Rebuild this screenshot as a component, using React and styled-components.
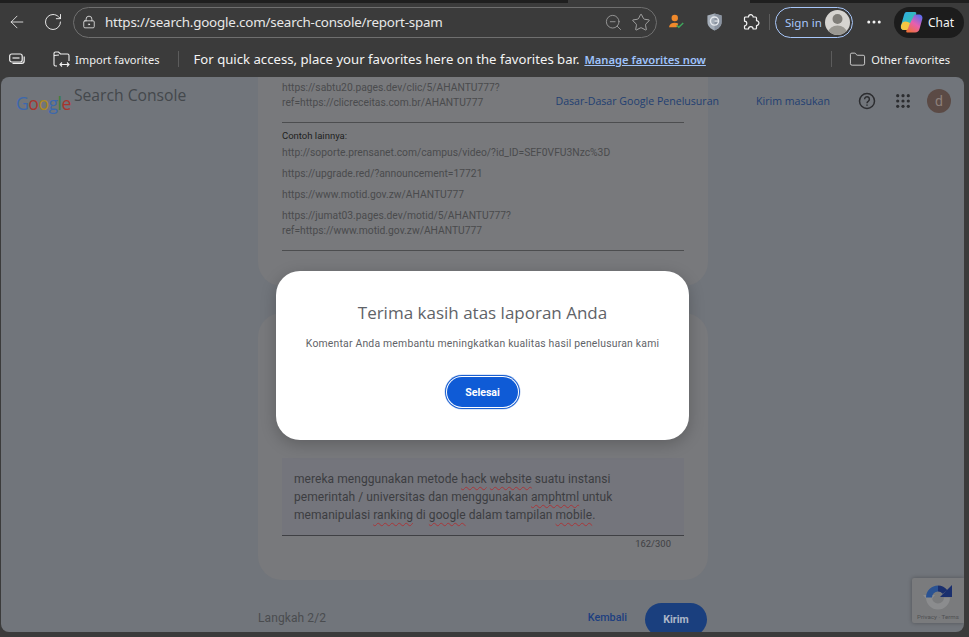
import React from "react";
import styled, { createGlobalStyle } from "styled-components";
import { ArrowLeft, RotateCw, LockKeyhole, ZoomOut, Star, Folder, MoreHorizontal } from "lucide-react";

const GlobalStyle = createGlobalStyle`
  html, body {
    margin: 0;
    padding: 0;
    height: 100%;
    overflow: hidden;
    background: #3b3b3b;
  }
`;

const Shell = styled.div`
  width: 969px;
  height: 637px;
  display: flex;
  flex-direction: column;
  background: #3b3b3b;
  font-family: "Noto Sans", "Open Sans", sans-serif;
  overflow: hidden;
`;

const TabStrip = styled.div`
  height: 3px;
  flex: none;
  display: grid;
  grid-template-columns: 568px 182px 1fr;
  span { background: #1f1f1f; }
  span:nth-child(2) { background: #3b3b3b; }
`;

const Toolbar = styled.div`
  height: 38px;
  flex: none;
  display: flex;
  align-items: center;
  padding: 0 6px 0 7px;
  color: #f2f2f2;
`;

const NavButton = styled.div`
  width: ${(p) => p.$w || 20}px;
  margin-left: ${(p) => p.$ml || 0}px;
  margin-right: ${(p) => p.$mr || 0}px;
  flex: none;
  display: flex;
  justify-content: center;
  align-items: center;
`;

const AddressBar = styled.div`
  width: 584px;
  height: 31px;
  flex: none;
  box-sizing: border-box;
  border: 1px solid #6f6f6f;
  border-radius: 16px;
  display: flex;
  align-items: center;
  padding: 0 5px 0 8px;
  margin-right: 11px;
`;

const Url = styled.span`
  flex: 1;
  margin-left: 9px;
  font-size: 13.4px;
  letter-spacing: -0.2px;
  color: #e8e8e8;
  white-space: nowrap;
`;

const SignIn = styled.div`
  width: 78px;
  height: 31px;
  box-sizing: border-box;
  flex: none;
  border: 1px solid #a8c7fa;
  border-radius: 16px;
  display: flex;
  align-items: center;
  justify-content: space-between;
  padding: 0 2px 0 9px;
  font-size: 11.6px;
  color: #a8c7fa;
`;

const AvatarDisc = styled.div`
  width: 25px;
  height: 25px;
  border-radius: 50%;
  background: #d6d4d0;
  overflow: hidden;
  display: flex;
`;

const Divider = styled.div`
  width: 1px;
  height: ${(p) => p.$h || 16}px;
  background: #5c5c5c;
  flex: none;
  margin: ${(p) => p.$m || "0"};
`;

const ChatPill = styled.div`
  width: 70px;
  height: 31px;
  flex: none;
  background: #1c1c1c;
  border-radius: 16px;
  display: flex;
  align-items: center;
  gap: 4px;
  padding-left: 5px;
  box-sizing: border-box;
  font-size: 12px;
  color: #f4f4f4;
`;

const FavBar = styled.div`
  height: 36px;
  flex: none;
  display: flex;
  align-items: center;
  padding: 0 19px 0 9px;
  color: #f0f0f0;
  white-space: nowrap;
`;

const FavItem = styled.span`
  font-size: 11.1px;
  margin-left: ${(p) => p.$ml || 0}px;
`;

const FavHint = styled.span`
  font-size: 13.15px;
  color: #f4f4f4;
`;

const FavLink = styled.a`
  font-size: 11.2px;
  font-weight: 600;
  color: #9fc3fb;
  text-decoration: underline;
  margin-left: 5px;
`;

const Viewport = styled.div`
  position: relative;
  flex: none;
  width: 963px;
  height: 555px;
  margin-left: 1px;
  border-radius: 8px;
  overflow: hidden;
  background: #71757b;
  font-family: Roboto, "Noto Sans", sans-serif;
`;

const Header = styled.header`
  position: absolute;
  inset: 0 0 auto 0;
  height: 48px;
  display: flex;
  align-items: center;
  padding: 0 13px 0 15px;
`;

const Logo = styled.div`
  display: flex;
  align-items: flex-start;
  gap: 3px;
  margin-right: auto;
`;

const GoogleWord = styled.span`
  font-family: "Open Sans", sans-serif;
  font-size: 17.6px;
  letter-spacing: -0.5px;
  line-height: 20px;
  margin-top: 4px;
`;

const Letter = styled.span`
  color: ${(p) => p.$c};
`;

const ProductName = styled.span`
  font-family: "Open Sans", sans-serif;
  font-size: 15.7px;
  color: #44484c;
  line-height: 20px;
  margin-top: -4px;
`;

const TopLink = styled.a`
  font-family: "Open Sans", sans-serif;
  font-size: 10.6px;
  color: #223f72;
  margin-right: ${(p) => p.$mr}px;
`;

const AccountAvatar = styled.div`
  width: 24px;
  height: 24px;
  border-radius: 50%;
  background: #5b4a45;
  color: #8d807b;
  font-size: 14px;
  display: flex;
  align-items: center;
  justify-content: center;
  margin-left: 17px;
`;

const Column = styled.main`
  width: 450px;
  margin: 0 auto;
  padding-left: 1px;
`;

const Card = styled.section`
  background: #78797c;
  border-radius: ${(p) => (p.$top ? "0 0 24px 24px" : "24px")};
  height: ${(p) => p.$h}px;
  box-sizing: border-box;
  padding: ${(p) => p.$pad};
  display: flex;
  flex-direction: column;
  justify-content: ${(p) => (p.$end ? "flex-end" : "flex-start")};
  margin-bottom: ${(p) => p.$mb}px;
`;

const UrlBlock = styled.p`
  margin: 0 0 ${(p) => p.$mb ?? 6}px;
  font-size: 10.3px;
  line-height: 15px;
  color: #4a4b4d;
`;

const Rule = styled.hr`
  width: 100%;
  margin: ${(p) => p.$m};
  border: 0;
  border-top: 1px solid #4c4d4f;
`;

const Caption = styled.p`
  margin: 0 0 3px;
  font-size: 9.5px;
  line-height: 13px;
  color: #1e1f21;
`;

const TextBox = styled.div`
  background: #74757c;
  border-bottom: 1px solid #3f4044;
  height: 78px;
  box-sizing: border-box;
  padding: 12px 12px 0;
  font-size: 12px;
  line-height: 18px;
  color: #3c3d41;
  letter-spacing: 0.06px;
`;

const Misspelt = styled.span`
  text-decoration: underline wavy #a8363a 1px;
  text-underline-offset: 3px;
`;

const Counter = styled.div`
  font-size: 9.4px;
  letter-spacing: 0.05px;
  line-height: 14px;
  margin-top: 1px;
  margin-bottom: 1px;
  text-align: right;
  padding-right: 13px;
  color: #3f4044;
`;

const Footer = styled.div`
  display: flex;
  align-items: center;
  height: 29px;
  padding-right: 1px;
`;

const Step = styled.span`
  font-size: 12px;
  letter-spacing: 0.1px;
  color: #4a4c4f;
  margin-right: auto;
`;

const BackLink = styled.a`
  font-size: 10.8px;
  font-weight: 500;
  color: #1d3f80;
  margin-right: 18px;
`;

const SendButton = styled.div`
  width: 62px;
  height: 33px;
  margin-top: 4px;
  border-radius: 17px;
  background: #1a3f7e;
  color: #aeb7c8;
  font-size: 10.6px;
  font-weight: 700;
  display: flex;
  align-items: center;
  justify-content: center;
`;

const Recaptcha = styled.aside`
  position: absolute;
  right: 0;
  bottom: 9px;
  width: 52px;
  height: 45px;
  background: #7a7b7d;
  border-radius: 2px 0 0 2px;
  box-shadow: 0 0 4px rgba(0, 0, 0, 0.3);
  display: flex;
  flex-direction: column;
  align-items: center;
  padding-top: 5px;
  box-sizing: border-box;
  overflow: hidden;
`;

const RecaptchaText = styled.span`
  font-size: 6.2px;
  line-height: 8px;
  color: #4f5052;
  white-space: nowrap;
  margin-top: 1px;
`;

const Modal = styled.div`
  position: absolute;
  left: 275px;
  top: 194px;
  width: 413px;
  height: 169px;
  background: #fff;
  border-radius: 24px;
  box-shadow: 0 4px 16px rgba(0, 0, 0, 0.22);
  box-sizing: border-box;
  padding-top: 31px;
  display: flex;
  flex-direction: column;
  align-items: center;
`;

const ModalTitle = styled.h2`
  margin: 0;
  font-family: "Open Sans", sans-serif;
  font-weight: 400;
  font-size: 17px;
  line-height: 22px;
  color: #5f6368;
`;

const ModalText = styled.p`
  margin: 13px 0 0;
  font-size: 10.4px;
  line-height: 14px;
  letter-spacing: 0.2px;
  color: #5f6368;
`;

const DoneButton = styled.div`
  margin-top: 26px;
  width: 71px;
  height: 30px;
  border-radius: 15px;
  background: #0f5bd6;
  color: #fff;
  font-size: 10.6px;
  font-weight: 700;
  display: flex;
  align-items: center;
  justify-content: center;
  box-shadow: 0 0 0 1px #fff, 0 0 0 2px #1a5fd0, 0 0 0 2.5px #b7cdf2;
`;

const PersonCheck = () => (
  <svg width="16" height="16" viewBox="0 0 18 18">
    <circle cx="6.5" cy="4.5" r="3.6" fill="#f0892b" />
    <path d="M0 15c.5-3.6 3-5.2 6.5-5.2 1.7 0 3 .4 4 1.2L8.5 15z" fill="#f0892b" />
    <path d="M8.6 12.6l2.4 2.4 5-5" fill="none" stroke="#3fa75c" strokeWidth="1.6" />
  </svg>
);

const ShieldIcon = () => (
  <svg width="17" height="20" viewBox="0 0 18 20">
    <path d="M9 1l7.5 2v7c0 4-3.2 7.4-7.5 9C4.700 17.400 1.500 14 1.500 10V3z" fill="#a4adb8" />
    <path d="M9 1l7.500 2v7c0 4-3.200 7.400-7.500 9z" fill="#8a93a0" />
    <circle cx="9" cy="9" r="4.300" fill="none" stroke="#e6e9ee" strokeWidth="1.500" />
    <path d="M9 9h4" stroke="#e6e9ee" strokeWidth="1.300" />
  </svg>
);

const ExtensionIcon = () => (
  <svg width="18" height="18" viewBox="0 0 18 18" fill="none" stroke="#f4f4f4" strokeWidth="1.200" strokeLinejoin="round">
    <path d="M6.500 4H3.500a1 1 0 0 0-1 1v3.200a2.300 2.300 0 1 1 0 4.600V15a1 1 0 0 0 1 1h3a2.300 2.300 0 0 1 4.600 0h2.400a1 1 0 0 0 1-1v-2.500a2.400 2.400 0 1 0 0-4.800V5a1 1 0 0 0-1-1h-2.400a2.300 2.300 0 1 0-4.600 0z" />
  </svg>
);

const CollectionsIcon = () => (
  <svg width="16" height="14" viewBox="0 0 16 14" fill="none" stroke="#f0f0f0" strokeWidth="1.200">
    <rect x="0.700" y="2" width="12.500" height="8" rx="2" />
    <path d="M3.500 6h7" />
    <path d="M15.200 4.500v4.200c0 1.500-1 2.600-2.500 2.600H3.500" />
  </svg>
);

const ImportIcon = () => (
  <svg width="17" height="17" viewBox="0 0 17 17" fill="none" stroke="#f0f0f0" strokeWidth="1.100">
    <path d="M4 15H2.500A1.500 1.500 0 0 1 1 13.500v-11A1.500 1.500 0 0 1 2.500 1h3l2 2h7A1.500 1.500 0 0 1 16 4.500V10" />
    <path d="M1 4.500l5-.5M7 13.500h9M14 11.500l2 2-2 2M9 11.500l-2 2 2 2" />
  </svg>
);

const CopilotIcon = () => (
  <svg width="25" height="24" viewBox="0 0 24 24">
    <defs>
      <linearGradient id="cpA" x1="0" y1="0" x2="1" y2="1">
        <stop offset="0" stopColor="#2ea6f0" />
        <stop offset="1" stopColor="#37d08a" />
      </linearGradient>
      <linearGradient id="cpB" x1="0.800" y1="0" x2="0.200" y2="1">
        <stop offset="0" stopColor="#5a6cf0" />
        <stop offset="0.5" stopColor="#e75fb0" />
        <stop offset="1" stopColor="#f0703a" />
      </linearGradient>
    </defs>
    <path d="M7 2h8.500c1 0 1.500.8 1.200 1.800L12.500 17c-.6 1.800-1.800 3-3.500 3H4.500C2 20 .8 18 1.500 15.500L4.500 5C5 3 5.800 2 7 2z" fill="url(#cpA)" />
    <path d="M15 4.500h4c3 0 4.500 2 3.800 4.500L20 19c-.6 2-2 3.500-4.500 3.500H8c-1 0-1.500-.8-1.200-1.800z" fill="url(#cpB)" />
    <path d="M3 12.500c2.500-1.500 5-1 7.500.5l-2 5.500c-.5 1-1.200 1.500-2.500 1.500H4.500c-2.500 0-3.500-2-3-4.500z" fill="#f4c542" />
  </svg>
);

const GridDots = () => (
  <svg width="14" height="14" viewBox="0 0 14 14" fill="#2c2d30">
    {[1.700, 7, 12.300].flatMap((y) =>
      [1.700, 7, 12.300].map((x) => <circle key={`${x}-${y}`} cx={x} cy={y} r="1.600" />)
    )}
  </svg>
);

const HelpIcon = () => (
  <svg width="18" height="18" viewBox="0 0 18 18" fill="none" stroke="#2c2d30" strokeWidth="1.500">
    <circle cx="9" cy="9" r="7.500" />
    <path d="M6.600 7.200a2.400 2.400 0 1 1 3.800 1.900c-.9.600-1.400 1-1.400 2.100" />
    <path d="M9 12.400v1.300" />
  </svg>
);

const RecaptchaLogo = () => (
  <svg width="30" height="29" viewBox="0 0 30 29" fill="none">
    <path d="M24 14.500A9 9 0 0 1 6 14.500" stroke="#8b8c8e" strokeWidth="6" />
    <path d="M0 12h12l-6 7z" fill="#8b8c8e" />
    <path d="M6 14.500A9 9 0 0 1 15 5.500" stroke="#2a5292" strokeWidth="6" />
    <path d="M15 5.500A9 9 0 0 1 22 9" stroke="#1a2f6e" strokeWidth="6" />
    <path d="M29 2v12H17z" fill="#1a2f6e" />
  </svg>
);

export default function App() {
  return (
    <Shell>
      <GlobalStyle />
      <TabStrip>
        <span />
        <span />
        <span />
      </TabStrip>
      <Toolbar>
        <NavButton $w={20} $mr={16}>
          <ArrowLeft size={26} strokeWidth={1} />
        </NavButton>
        <NavButton $w={20} $mr={10}>
          <RotateCw size={20} strokeWidth={1.100} />
        </NavButton>
        <AddressBar>
          <LockKeyhole size={14} strokeWidth={1.400} color="#e8e8e8" />
          <Url>https://search.google.com/search-console/report-spam</Url>
          <NavButton $w={20} $mr={8}>
            <ZoomOut size={19} strokeWidth={1} color="#a9a9a9" />
          </NavButton>
          <NavButton $w={20}>
            <Star size={21} strokeWidth={1} color="#b5b5b5" />
          </NavButton>
        </AddressBar>
        <NavButton $w={18} $mr={19}>
          <PersonCheck />
        </NavButton>
        <NavButton $w={18} $mr={19}>
          <ShieldIcon />
        </NavButton>
        <NavButton $w={18}>
          <ExtensionIcon />
        </NavButton>
        <Divider $h={16} $m="0 5px 0 9px" />
        <SignIn>
          Sign in
          <AvatarDisc>
            <svg width="25" height="25" viewBox="0 0 25 25">
              <circle cx="12.500" cy="9" r="5" fill="#7f7d78" />
              <ellipse cx="12.500" cy="22" rx="9" ry="6.500" fill="#9a9892" />
            </svg>
          </AvatarDisc>
        </SignIn>
        <NavButton $w={20} $ml={11} $mr={10}>
          <MoreHorizontal size={18} strokeWidth={2} />
        </NavButton>
        <ChatPill>
          <CopilotIcon />
          Chat
        </ChatPill>
      </Toolbar>
      <FavBar>
        <CollectionsIcon />
        <NavButton $w={17} $ml={28}>
          <ImportIcon />
        </NavButton>
        <FavItem $ml={5}>Import favorites</FavItem>
        <Divider $h={16} $m="0 15px 0 18px" />
        <FavHint>For quick access, place your favorites here on the favorites bar.</FavHint>
        <FavLink>Manage favorites now</FavLink>
        <Divider $h={16} $m="0 17px 0 auto" />
        <Folder size={17} strokeWidth={1.100} />
        <FavItem $ml={5}>Other favorites</FavItem>
      </FavBar>
      <Viewport>
        <Column>
          <Card $top $h={209} $mb={27} $pad="3px 24px 0">
            <UrlBlock $mb={0}>
              https://sabtu20.pages.dev/clic/5/AHANTU777?
              <br />
              ref=https://clicreceitas.com.br/AHANTU777
            </UrlBlock>
            <Rule $m="12px 0 6px" />
            <Caption>Contoh lainnya:</Caption>
            <UrlBlock>http://soporte.prensanet.com/campus/video/?id_ID=SEF0VFU3Nzc%3D</UrlBlock>
            <UrlBlock>https://upgrade.red/?announcement=17721</UrlBlock>
            <UrlBlock>https://www.motid.gov.zw/AHANTU777</UrlBlock>
            <UrlBlock $mb={0}>
              https://jumat03.pages.dev/motid/5/AHANTU777?
              <br />
              ref=https://www.motid.gov.zw/AHANTU777
            </UrlBlock>
            <Rule $m="12px 0 0" />
          </Card>
          <Card $h={267} $mb={23} $end $pad="0 24px 28px">
            <TextBox>
              mereka menggunakan metode <Misspelt>hack</Misspelt> <Misspelt>website</Misspelt> suatu instansi
              pemerintah / universitas dan menggunakan <Misspelt>amphtml</Misspelt> untuk memanipulasi{" "}
              <Misspelt>ranking</Misspelt> di <Misspelt>google</Misspelt> dalam tampilan <Misspelt>mobile</Misspelt>.
            </TextBox>
            <Counter>162/300</Counter>
          </Card>
          <Footer>
            <Step>Langkah 2/2</Step>
            <BackLink>Kembali</BackLink>
            <SendButton>Kirim</SendButton>
          </Footer>
        </Column>
        <Header>
          <Logo>
            <GoogleWord>
              <Letter $c="#3c68ad">G</Letter>
              <Letter $c="#a8352e">o</Letter>
              <Letter $c="#b08a1f">o</Letter>
              <Letter $c="#3c68ad">g</Letter>
              <Letter $c="#38803f">l</Letter>
              <Letter $c="#a8352e">e</Letter>
            </GoogleWord>
            <ProductName>Search Console</ProductName>
          </Logo>
          <TopLink $mr={37}>Dasar-Dasar Google Penelusuran</TopLink>
          <TopLink $mr={28}>Kirim masukan</TopLink>
          <HelpIcon />
          <NavButton $w={14} $ml={20}>
            <GridDots />
          </NavButton>
          <AccountAvatar>d</AccountAvatar>
        </Header>
        <Modal>
          <ModalTitle>Terima kasih atas laporan Anda</ModalTitle>
          <ModalText>Komentar Anda membantu meningkatkan kualitas hasil penelusuran kami</ModalText>
          <DoneButton>Selesai</DoneButton>
        </Modal>
        <Recaptcha>
          <RecaptchaLogo />
          <RecaptchaText>Privacy · Terms</RecaptchaText>
        </Recaptcha>
      </Viewport>
    </Shell>
  );
}
